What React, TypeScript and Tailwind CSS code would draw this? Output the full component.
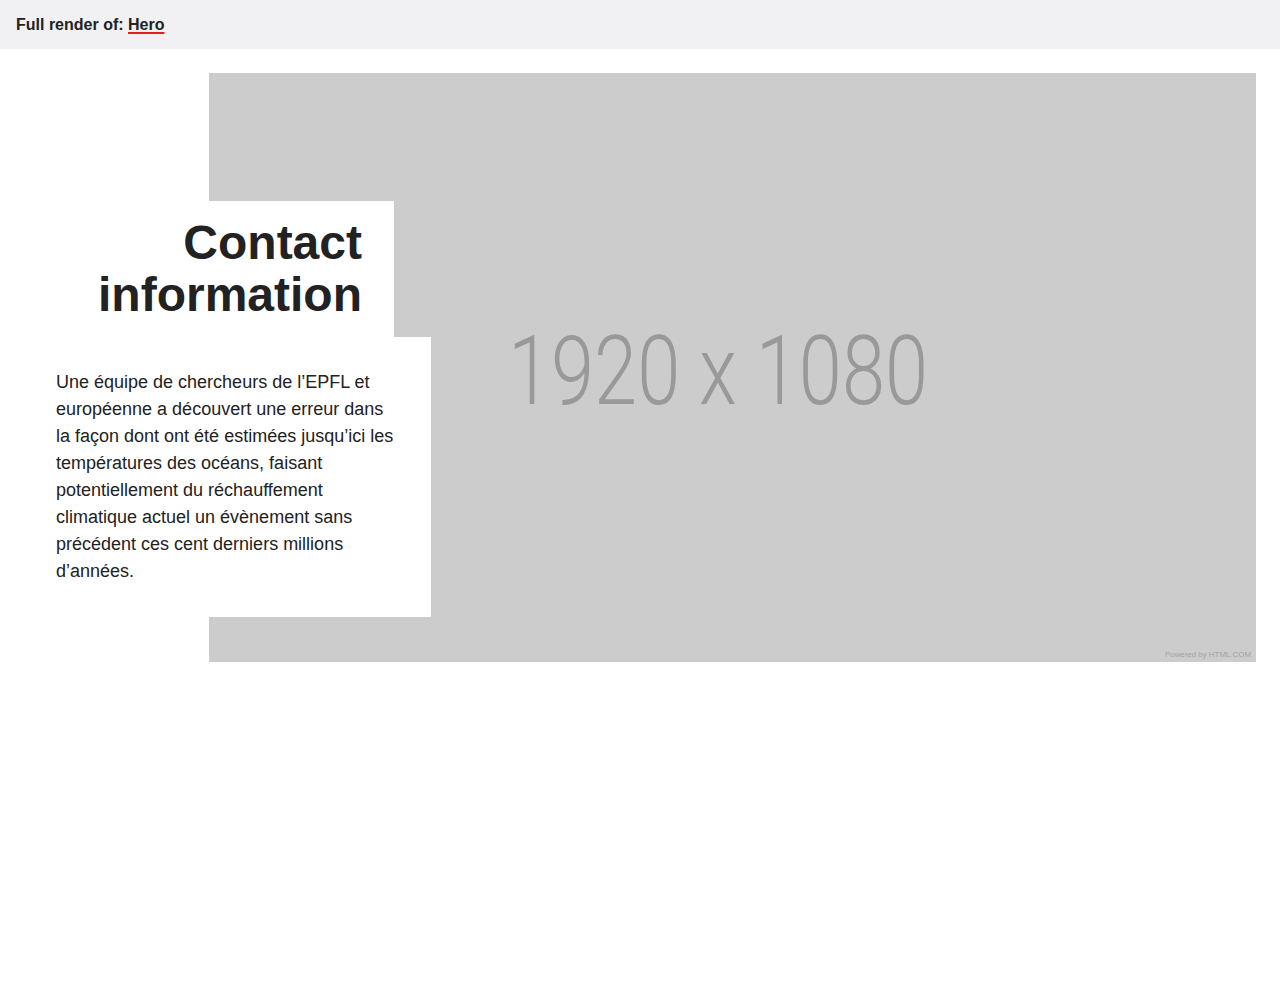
import React from 'react';

const sans = { fontFamily: '"Liberation Sans", Arial, Helvetica, sans-serif' };

function Placeholder() {
  return (
    <div className="relative w-full aspect-[1920/1080] bg-[#cccccc]">
      <svg className="absolute inset-0 h-full w-full" viewBox="0 0 1047 589" preserveAspectRatio="none">
        <text
          x="299"
          y="331"
          textLength="420"
          lengthAdjust="spacingAndGlyphs"
          fill="#999999"
          fontSize="97"
          fontWeight="300"
          fontFamily="Roboto, 'Liberation Sans', sans-serif"
        >
          1920 x 1080
        </text>
        <text
          x="956"
          y="584"
          textLength="86"
          lengthAdjust="spacingAndGlyphs"
          fill="#a3a3a3"
          fontSize="7"
          fontFamily="'Liberation Sans', sans-serif"
        >
          Powered by HTML.COM
        </text>
      </svg>
    </div>
  );
}

export default function App() {
  return (
    <div className="min-h-[990px] bg-white text-[#222222]" style={sans}>
      {/* render header */}
      <div className="h-[49px] bg-[#f1f1f3] px-4 flex items-center">
        <p className="text-base font-bold">
          Full render of:{' '}
          <a href="#" className="underline decoration-[#e11d2a] decoration-[1.5px] underline-offset-2">Hero</a>
        </p>
      </div>

      <section className="p-6">
        <div className="grid grid-cols-[185px_222px_1fr]">
          <div className="col-start-2 col-end-4 row-start-1">
            <Placeholder />
          </div>

          <div className="col-start-1 col-end-3 row-start-1 self-start mt-[128px] relative z-10">
            <div className="w-[370px] bg-white py-4 pr-8 text-right">
              <h1 className="text-[48px] leading-[52px] font-bold">
                Contact<br />information
              </h1>
            </div>
            <div className="w-[407px] bg-white p-8">
              <p className="text-[18px] leading-[27px]">
                Une équipe de chercheurs de l’EPFL et européenne a découvert une erreur dans la façon dont ont été estimées jusqu’ici les températures des océans, faisant potentiellement du réchauffement climatique actuel un évènement sans précédent ces cent derniers millions d’années.
              </p>
            </div>
          </div>
        </div>
      </section>
    </div>
  );
}
